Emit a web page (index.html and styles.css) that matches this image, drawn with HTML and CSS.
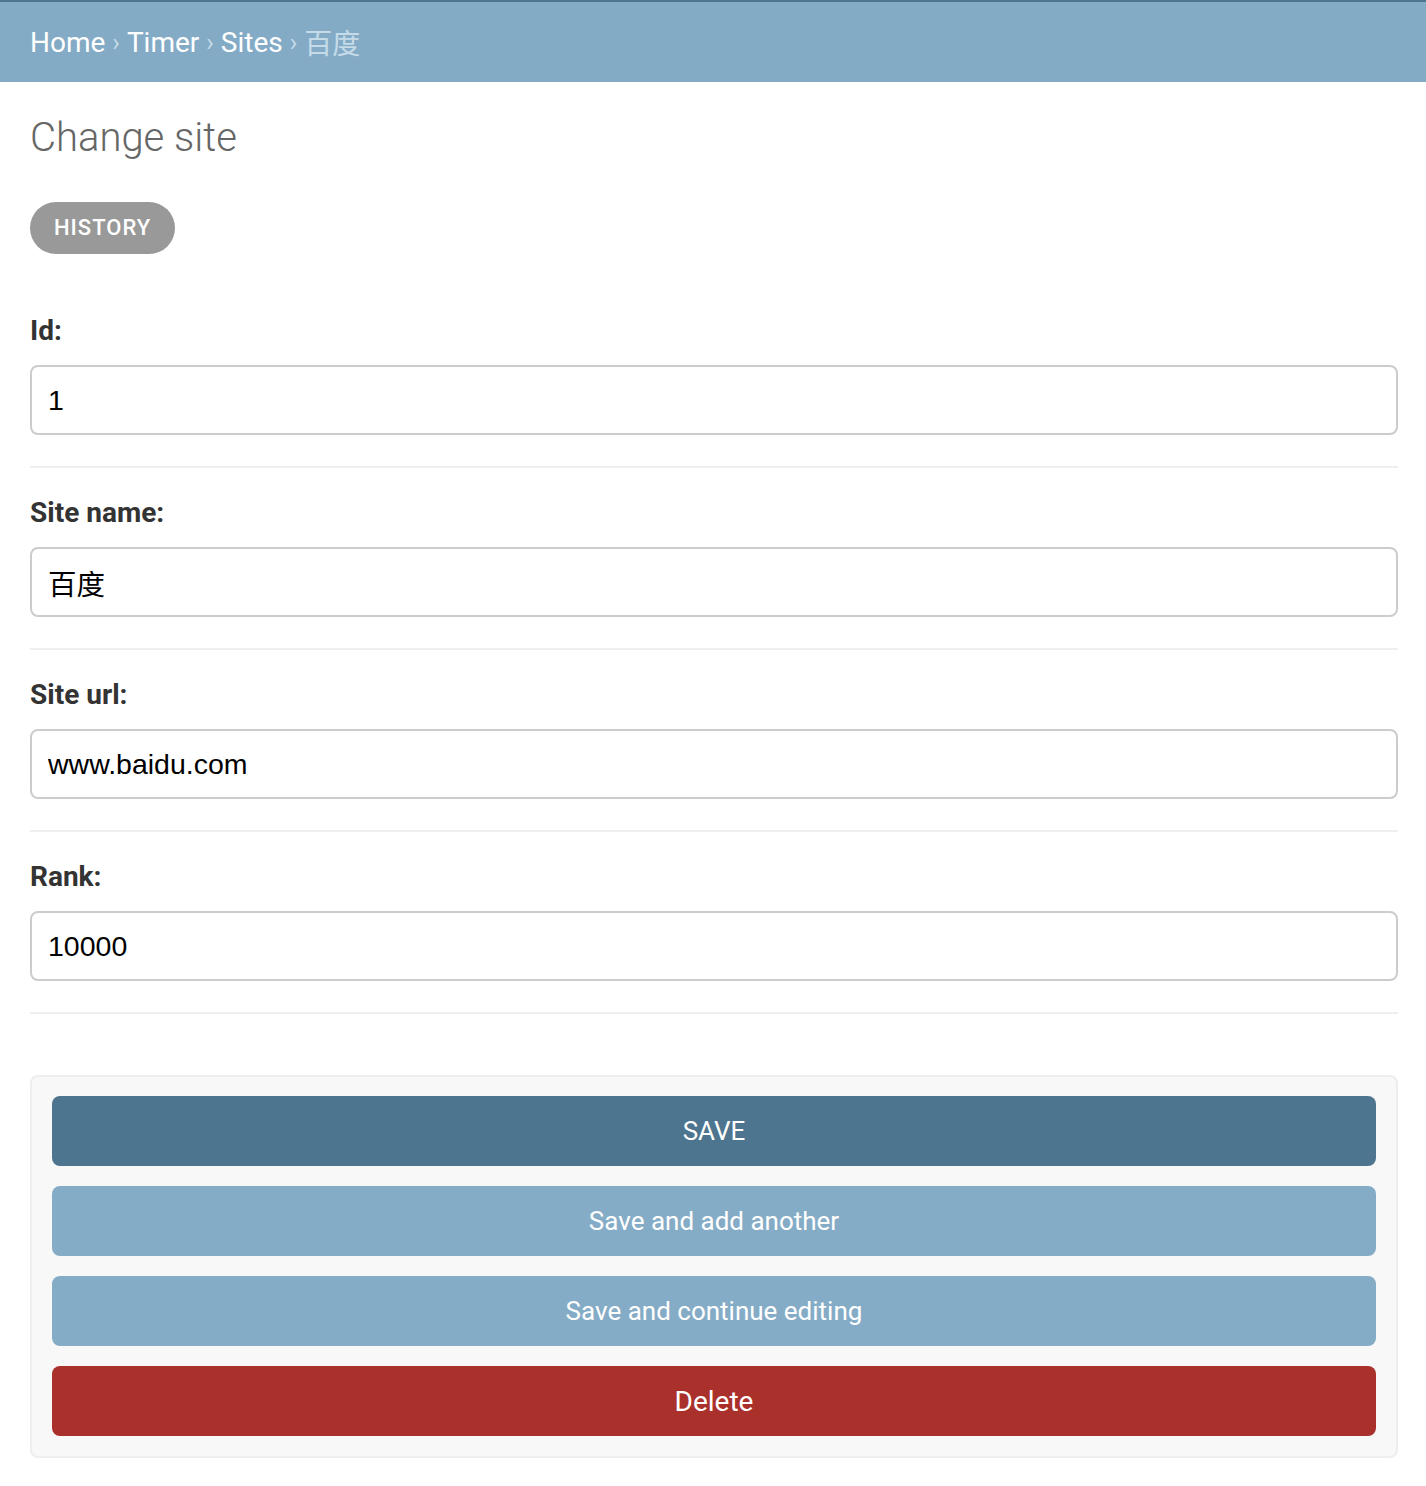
FILE: index.html
```html
<!DOCTYPE html>
<html lang="zh">
<head>
<meta charset="utf-8">
<title>Change site</title>
<link rel="stylesheet" href="styles.css">
</head>
<body>
<div class="breadcrumbs">
  <a href="#">Home</a><span class="sep">›</span><a href="#">Timer</a><span class="sep">›</span><a href="#">Sites</a><span class="sep">›</span><span class="current">百度</span>
</div>
<main class="content">
  <h1 class="title">Change site</h1>
  <div class="object-tools"><a href="#" class="history">History</a></div>
  <form class="form">
    <div class="form-row">
      <label class="label">Id:</label>
      <input class="input" type="text" value="1">
    </div>
    <div class="form-row">
      <label class="label">Site name:</label>
      <input class="input" type="text" value="百度">
    </div>
    <div class="form-row">
      <label class="label">Site url:</label>
      <input class="input" type="text" value="www.baidu.com">
    </div>
    <div class="form-row">
      <label class="label">Rank:</label>
      <input class="input" type="text" value="10000">
    </div>
    <div class="submit-row">
      <button type="button" class="btn btn-save">SAVE</button>
      <button type="button" class="btn btn-alt">Save and add another</button>
      <button type="button" class="btn btn-alt">Save and continue editing</button>
      <a href="#" class="btn btn-delete">Delete</a>
    </div>
  </form>
</main>
</body>
</html>
```
FILE: styles.css
```css
* { box-sizing: border-box; }
html, body { margin: 0; padding: 0; background: #fff; }
body {
  font-family: Roboto, "Noto Sans CJK SC", sans-serif;
  color: #333;
}
.breadcrumbs {
  border-top: 2px solid #4b7590;
  background: #84abc6;
  height: 82px;
  padding: 0 30px;
  display: flex;
  align-items: center;
  font-size: 28px;
  color: #c5dbe8;
}
.breadcrumbs a { color: #fff; text-decoration: none; }
.breadcrumbs .sep { margin: 0 7px; color: #c5dbe8; font-size: 25px; }
.breadcrumbs .current { color: #c5dbe8; font-family: "Noto Sans CJK SC", sans-serif; }
.content { padding: 0 28px 0 30px; }
.title {
  margin: 32px 0 0;
  font-size: 40px;
  line-height: 48px;
  font-weight: 300;
  color: #666;
}
.object-tools { margin-top: 40px; }
.history {
  display: inline-block;
  height: 52px;
  line-height: 52px;
  padding: 0 24px;
  border-radius: 26px;
  background: #999;
  color: #fff;
  font-size: 22px;
  font-weight: 500;
  letter-spacing: 1px;
  text-transform: uppercase;
  text-decoration: none;
}
.form { margin-top: 32px; }
.form-row {
  padding: 29px 0 31px;
  border-bottom: 2px solid #eee;
  display: flex;
  flex-direction: column;
}
.label {
  font-size: 28px;
  line-height: 32px;
  font-weight: 700;
  color: #333;
  margin-bottom: 18px;
}
.input {
  height: 70px;
  border: 2px solid #ccc;
  border-radius: 8px;
  padding: 0 16px;
  font-family: "Liberation Sans", Arial, "Noto Sans CJK SC", sans-serif;
  font-size: 28.5px;
  color: #000;
  background: #fff;
  width: 100%;
}
.submit-row {
  margin-top: 61px;
  background: #f8f8f8;
  border: 2px solid #eee;
  border-radius: 8px;
  padding: 19px 20px 20px;
  display: flex;
  flex-direction: column;
  gap: 20px;
}
.btn {
  display: flex;
  align-items: center;
  justify-content: center;
  height: 70px;
  border: 0;
  border-radius: 8px;
  color: #fff;
  font-family: Roboto, sans-serif;
  font-size: 26px;
  text-decoration: none;
  width: 100%;
}
.btn-save { background: #4d758f; }
.btn-alt { background: #85acc6; }
.btn-delete { background: #aa302b; font-size: 28px; }
```
